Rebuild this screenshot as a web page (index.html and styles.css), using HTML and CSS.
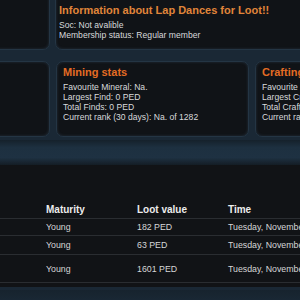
FILE: index.html
```html
<!DOCTYPE html>
<html lang="en">
    <head>
        <meta charset="UTF-8">
        <meta name="viewport" content="width=device-width, initial-scale=1.0">
        <title>Profile</title>
        <link rel="stylesheet" href="styles.css">
    </head>
<body>
    <div class="page">
        <div class="row row-top">
            <div class="card card-side"></div>
            <div class="card card-info">
                <h2>Information about Lap Dances for Loot!!</h2>
                <p>Soc: Not avalible</p>
                <p>Membership status: Regular member</p>
            </div>
        </div>

        <div class="row row-stats">
            <div class="card card-side"></div>
            <div class="card card-stat">
                <h3>Mining stats</h3>
                <p>Favourite Mineral: Na.</p>
                <p>Largest Find: 0 PED</p>
                <p>Total Finds: 0 PED</p>
                <p>Current rank (30 days): Na. of 1282</p>
            </div>
            <div class="card card-stat">
                <h3>Crafting stats</h3>
                <p>Favourite Item: Na.</p>
                <p>Largest Craft: 0 PED</p>
                <p>Total Crafts: 0 PED</p>
                <p>Current rank (30 days): Na. of 1282</p>
            </div>
        </div>

        <div class="band"></div>

        <div class="loot">
            <table class="loot-table">
                <tr>
                    <th class="col-img"></th>
                    <th>Maturity</th>
                    <th>Loot value</th>
                    <th>Time</th>
                </tr>
                <tr class="row-a">
                    <td class="col-img"></td>
                    <td>Young</td>
                    <td>182 PED</td>
                    <td>Tuesday, November 23</td>
                </tr>
                <tr>
                    <td class="col-img"></td>
                    <td>Young</td>
                    <td>63 PED</td>
                    <td>Tuesday, November 23</td>
                </tr>
                <tr class="tall">
                    <td class="col-img"></td>
                    <td>Young</td>
                    <td>1601 PED</td>
                    <td>Tuesday, November 23</td>
                </tr>
            </table>
        </div>

        <div class="band band-bottom"></div>
    </div>
</body>
</html>
```

FILE: styles.css
```css
body {
    margin: 0;
    width: 300px;
    height: 300px;
    overflow: hidden;
    background-color: #1a2835;
    font-family: 'Liberation Sans', Arial, sans-serif;
    color: #d8dadc;
}

.page {
    width: 300px;
}

.row {
    display: flex;
}

.row-top {
    height: 60px;
    margin-top: -10px;
    gap: 5px;
}

.row-stats {
    height: 76px;
    margin-top: 11px;
    gap: 6px;
}

.card {
    flex: none;
    box-sizing: border-box;
    background-color: #101317;
    border: 1px solid #243544;
    border-radius: 7px;
    box-shadow: inset 0 0 3px rgba(70, 100, 125, 0.35);
    white-space: nowrap;
    overflow: hidden;
}

.card-side {
    width: 61px;
    margin-left: -11px;
}

.card-info {
    width: 260px;
    padding: 12px 0 0 3px;
}

.card-stat {
    width: 193px;
    padding: 3px 0 0 6px;
}

h2,
h3 {
    margin: 0 0 3px 0;
    font-size: 11px;
    line-height: 14px;
    font-weight: bold;
    white-space: nowrap;
}

h2 {
    color: #e0853a;
}

h3 {
    color: #e46c24;
}

p {
    margin: 0;
    font-size: 8.6px;
    line-height: 10px;
    white-space: nowrap;
}

.band {
    height: 25px;
    margin-top: 3px;
    background: linear-gradient(to bottom, #15212b 0%, #1d3040 30%, #1e3142 70%, #141d25 100%);
}

.loot {
    background-color: #111316;
    height: 122px;
    box-sizing: border-box;
    padding-top: 36px;
}

.loot-table {
    border-collapse: collapse;
    width: 400px;
    font-size: 8.8px;
    color: #d6d6d6;
    white-space: nowrap;
}

.loot-table th {
    text-align: left;
    font-weight: bold;
    font-size: 10px;
    color: #ececec;
    height: 17px;
    padding: 0;
    border-bottom: 1px solid #2a2d31;
}

.loot-table td {
    height: 18px;
    padding: 0;
    border-bottom: 1px solid #2a2d31;
}

.loot-table tr.row-a td {
    height: 16px;
}

.loot-table tr.tall td {
    height: 27px;
}

.col-img {
    width: 46px;
}

.loot-table th:nth-child(2),
.loot-table td:nth-child(2),
.loot-table th:nth-child(3),
.loot-table td:nth-child(3) {
    width: 91px;
}

.band-bottom {
    height: 20px;
    background: linear-gradient(to bottom, #17232e 0%, #1b2c3a 100%);
}
```
